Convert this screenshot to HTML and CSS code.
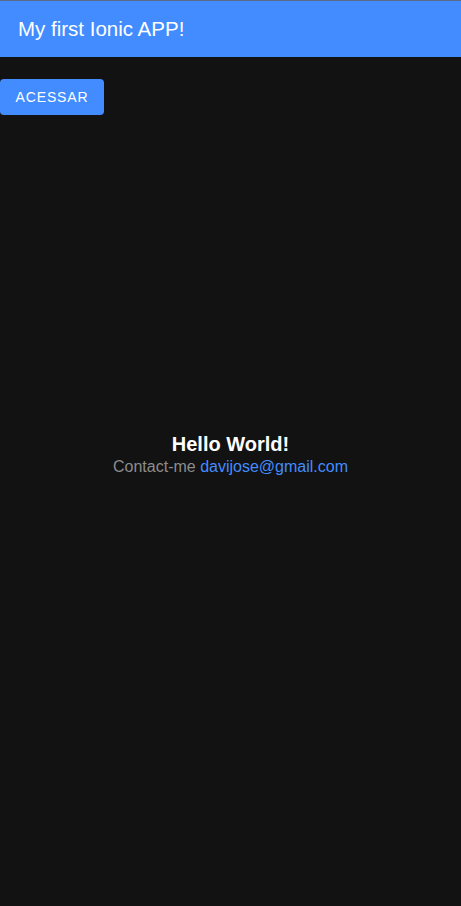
FILE: index.html
```html
<!DOCTYPE html>
<html>
<head>
<meta charset="utf-8">
<link rel="stylesheet" href="styles.css">
</head>
<body>
<div class="app">
  <header class="toolbar">
    <h1 class="title">My first Ionic APP!</h1>
  </header>
  <main class="content">
    <div class="actions">
      <button class="btn">ACESSAR</button>
    </div>
    <div class="center">
      <strong class="hello">Hello World!</strong>
      <p class="contact">Contact-me <a class="link" href="#">davijose@gmail.com</a></p>
    </div>
  </main>
</div>
</body>
</html>
```
FILE: styles.css
```css
html, body {
  margin: 0;
  padding: 0;
  height: 100%;
  background: #121212;
  font-family: "Liberation Sans", Arial, sans-serif;
}
.app {
  display: flex;
  flex-direction: column;
  height: 906px;
}
.toolbar {
  height: 56px;
  flex: none;
  background: #428cff;
  border-top: 1px solid #5b6b86;
  display: flex;
  align-items: center;
  padding: 0 18px;
}
.title {
  margin: 0;
  font-size: 20.5px;
  font-weight: 400;
  color: #ffffff;
}
.content {
  flex: 1;
  position: relative;
}
.actions {
  padding-top: 22px;
}
.btn {
  display: block;
  width: 104px;
  height: 36px;
  border: none;
  border-radius: 4px;
  background: #428cff;
  color: #ffffff;
  font-family: "Liberation Sans", Arial, sans-serif;
  font-size: 14px;
  letter-spacing: 0.06em;
  padding: 0;
  margin: 0;
}
.center {
  position: absolute;
  left: 0;
  right: 0;
  top: 374px;
  text-align: center;
}
.hello {
  display: block;
  color: #ffffff;
  font-size: 20px;
  line-height: 26px;
}
.contact {
  margin: 0;
  font-size: 16px;
  line-height: 20px;
  color: #8c8c8c;
}
.link {
  color: #428cff;
  text-decoration: none;
}
```
